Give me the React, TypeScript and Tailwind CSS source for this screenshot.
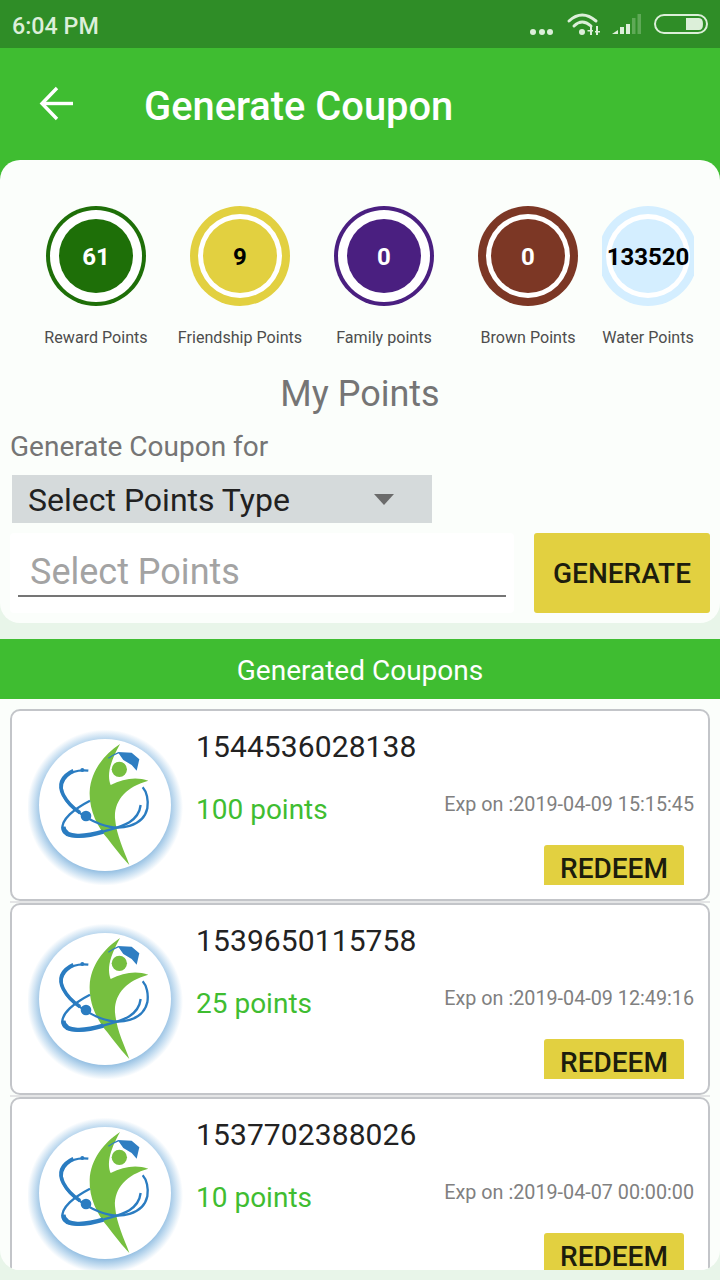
const font = "font-['Roboto',sans-serif]";

function Logo({ id }: { id: string }) {
  return (
    <svg width="156" height="156" viewBox="24 -3 468 468" className="shrink-0">
      <defs>
        <radialGradient id={id} gradientUnits="userSpaceOnUse" cx="255" cy="233" r="234">
          <stop offset="0%" stopColor="#ffffff" />
          <stop offset="80%" stopColor="#8ebbe0" />
          <stop offset="90%" stopColor="#c6def1" />
          <stop offset="100%" stopColor="#ffffff" />
        </radialGradient>
      </defs>
      <rect x="24" y="-3" width="468" height="468" fill={`url(#${id})`} />
      <circle cx="255" cy="225" r="198" fill="#ffffff" />
      <path d="M300 42 C250 75 212 125 209 185 C207 240 232 290 262 325 C285 355 308 385 328 405 C312 360 290 320 285 265 C282 210 320 170 385 152 C350 140 310 145 272 165 C262 140 265 105 300 42 Z" fill="#76bf3f" />
      <circle cx="298" cy="118" r="23" fill="#76bf3f" />
      <path d="M293 66 L335 68 L358 88 L350 122 L335 105 L310 90 Z" fill="#2f7ec2" />
      <path d="M265 85 Q280 74 296 68" fill="none" stroke="#2f7ec2" strokeWidth="4" />
      <path d="M205 122 C150 115 115 150 128 190 C140 225 190 262 240 282 C300 305 370 290 382 235 C386 210 380 185 368 172" fill="none" stroke="#2a7cc1" strokeWidth="7" />
      <path d="M160 122 C122 140 115 165 130 195 C142 218 160 235 180 248" fill="none" stroke="#2a7cc1" strokeWidth="11" />
      <path d="M210 212 C165 235 120 270 128 300 C135 330 200 320 250 305 C300 290 355 280 362 225" fill="none" stroke="#2a7cc1" strokeWidth="7" />
      <path d="M130 290 C132 328 200 320 250 305" fill="none" stroke="#2a7cc1" strokeWidth="13" />
      <circle cx="198" cy="258" r="16" fill="#2a7cc1" />
      <circle cx="187" cy="120" r="6" fill="#2a7cc1" />
    </svg>
  );
}

function Badge({ n, label, outer, inner, text, ringOnly }: { n: string; label: string; outer: string; inner: string; text: string; ringOnly?: boolean }) {
  return (
    <div className="w-full flex flex-col items-center">
      <div className="w-full flex justify-center overflow-hidden">
        <div className={`w-[100px] h-[100px] shrink-0 rounded-full flex items-center justify-center ${outer}`}>
          <div className={`rounded-full bg-white flex items-center justify-center ${ringOnly ? "w-[92px] h-[92px]" : "w-[84px] h-[84px]"}`}>
            <div className={`w-[74px] h-[74px] rounded-full flex items-center justify-center font-bold text-[24px] pt-[2px] ${inner} ${text}`}>{n}</div>
          </div>
        </div>
      </div>
      <div className="mt-[22px] text-[16.1px] leading-[20px] text-[#4d4d4d] whitespace-nowrap">{label}</div>
    </div>
  );
}

function Coupon({ id, code, pts, exp }: { id: string; code: string; pts: string; exp: string }) {
  return (
    <div className="h-[192px] mx-[10px] border-2 border-[#c3c5c9] rounded-[10px] bg-white flex overflow-hidden shrink-0">
      <div className="w-[172px] pl-[16px] pt-[18px] shrink-0"><Logo id={id} /></div>
      <div className="flex-1 pr-[14px] flex flex-col">
        <div className="text-[30px] leading-[36px] mt-[18px] ml-[12px] tracking-[0.1px] text-[#222222]">{code}</div>
        <div className="flex items-center justify-between ml-[12px] mt-[15px] h-[54px]">
          <span className="text-[#3fbd31] text-[28px] mt-[6px]">{pts}</span>
          <span className="text-[#808080] text-[19.75px] mb-[4px]">{exp}</span>
        </div>
        <div className="mt-auto self-end mr-[10px] w-[140px] h-[40px] mb-[14px] bg-[#e2d040] rounded-t-[3px] flex items-center justify-center text-[28px] font-medium text-[#1d1d0d] pt-[8px]">REDEEM</div>
      </div>
    </div>
  );
}

export default function App() {
  return (
    <div className={`${font} w-[720px] h-[1280px] overflow-hidden bg-[#e8f5e9] flex flex-col`}>
      <div className="h-[48px] bg-[#2f8d27] flex items-center justify-between pl-[12px] pr-[10px] shrink-0">
        <span className="text-[#dcefd9] text-[23.25px] font-medium pt-[4px]">6:04 PM</span>
        <svg width="182" height="48" viewBox="528 0 182 48">
          <g fill="#dcefd9">
            <circle cx="533" cy="32" r="3" /><circle cx="542" cy="32" r="3" /><circle cx="550" cy="32" r="3" />
            <circle cx="582" cy="32" r="3" />
            <path d="M590 26 L592 26 L592 35 L590 35 Z M596 26 L598 26 L598 35 L596 35 Z M587.5 30 L593 30 L593 31.5 L587.5 31.5 Z M595 31 L600 31 L600 32.5 L595 32.5 Z" />
            <path d="M612 34 L618 30 L618 34 Z" />
            <rect x="620" y="27" width="4" height="7" />
            <rect x="626" y="24" width="4" height="10" />
            <path d="M686 18 H699 Q703 18 703 24 Q703 30 699 30 H686 Z" />
          </g>
          <g fill="#5fa957">
            <rect x="632" y="18" width="3.5" height="16" />
            <rect x="637.5" y="14" width="3.5" height="20" />
          </g>
          <g fill="none" stroke="#dcefd9" strokeWidth="3" strokeLinecap="round">
            <path d="M569 21 Q582 9 596 21" />
            <path d="M574 26 Q582 18 591 26" />
          </g>
          <rect x="655" y="15" width="52" height="18" rx="9" fill="none" stroke="#dcefd9" strokeWidth="2" />
        </svg>
      </div>
      <div className="h-[112px] bg-[#3fbd31] flex items-center shrink-0">
        <svg width="36" height="36" viewBox="0 0 36 36" className="ml-[39px]" fill="none" stroke="white" strokeWidth="3.4">
          <path d="M34 17.5 H3" /><path d="M18 2 L3 17.5 L18 33" />
        </svg>
        <span className="ml-[69px] text-white text-[39.85px] font-medium pt-[5px]">Generate Coupon</span>
      </div>

      <div className="pb-[16px] shrink-0 relative">
        <div className="absolute top-0 left-0 right-0 h-[30px] bg-[#3fbd31]" />
        <div className="relative h-[463px] bg-[#fbfefb] rounded-[20px] flex flex-col">
          <div className="flex items-start pt-[46px] pl-[24px]">
            <div className="w-[144px] shrink-0"><Badge n="61" label="Reward Points" outer="bg-[#1e6f08]" inner="bg-[#1e6f08]" text="text-white" ringOnly /></div>
            <div className="w-[144px] shrink-0"><Badge n="9" label="Friendship Points" outer="bg-[#e2d040]" inner="bg-[#e2d040]" text="text-black" /></div>
            <div className="w-[144px] shrink-0"><Badge n="0" label="Family points" outer="bg-[#4a1f80]" inner="bg-[#4a1f80]" text="text-white" ringOnly /></div>
            <div className="w-[144px] shrink-0"><Badge n="0" label="Brown Points" outer="bg-[#7c3725]" inner="bg-[#7c3725]" text="text-white" /></div>
            <div className="w-[92px] ml-[2px] shrink-0"><Badge n="133520" label="Water Points" outer="bg-[#d4eeff]" inner="bg-[#d4eeff]" text="text-black" /></div>
          </div>
          <div className="text-center text-[36px] leading-[40px] text-[#757575] mt-[26px]">My Points</div>
          <div className="ml-[10px] mt-[17px] text-[28px] leading-[32px] text-[#757575]">Generate Coupon for</div>
          <div className="ml-[12px] mt-[12px] w-[420px] h-[48px] bg-[#d5dadb] flex items-center justify-between pl-[16px] pr-[38px]">
            <span className="text-[32px] text-[#212121] pt-[2px]">Select Points Type</span>
            <span className="w-0 h-0 border-l-[10px] border-r-[10px] border-t-[11px] border-l-transparent border-r-transparent border-t-[#6b6b6b]" />
          </div>
          <div className="flex mt-[10px] ml-[10px] mr-[10px] gap-[20px]">
            <div className="w-[504px] h-[80px] bg-white rounded-[4px] px-[8px] pt-[8px]">
              <div className="h-[56px] border-b-2 border-[#757575] pl-[12px] text-[36px] leading-[62px] text-[#a3a3a3]">Select Points</div>
            </div>
            <div className="w-[176px] h-[80px] bg-[#e2d040] rounded-[3px] flex items-center justify-center text-[28px] font-medium text-[#1d1d0d] pt-[2px]">GENERATE</div>
          </div>
        </div>
      </div>

      <div className="h-[60px] bg-[#3fbd31] flex items-center justify-center text-white text-[28px] pt-[3px] shrink-0">Generated Coupons</div>
      <div className="flex flex-col pt-[10px] h-[571px] shrink-0 overflow-hidden bg-[#fbfefb] rounded-b-[20px]">
        <Coupon id="l1" code="1544536028138" pts="100 points" exp="Exp on :2019-04-09 15:15:45" />
        <div className="h-[2px] mx-[10px] shrink-0 bg-[#e4e5e6]" />
        <Coupon id="l2" code="1539650115758" pts="25 points" exp="Exp on :2019-04-09 12:49:16" />
        <div className="h-[2px] mx-[10px] shrink-0 bg-[#e4e5e6]" />
        <Coupon id="l3" code="1537702388026" pts="10 points" exp="Exp on :2019-04-07 00:00:00" />
      </div>
    </div>
  );
}
